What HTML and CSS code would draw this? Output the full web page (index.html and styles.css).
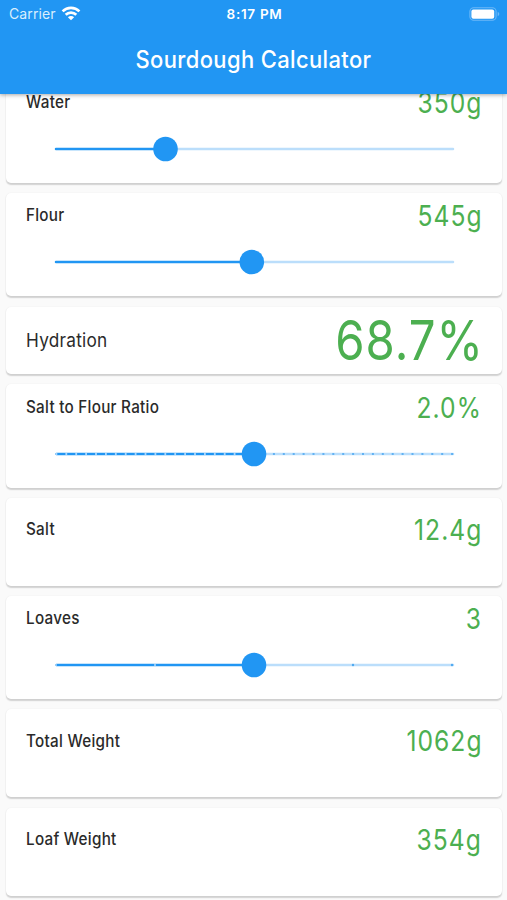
FILE: index.html
```
<!DOCTYPE html>
<html lang="en">
<head>
<meta charset="utf-8">
<title>Sourdough Calculator</title>
<link rel="stylesheet" href="styles.css">
</head>
<body>
<header class="appbar">
  <div class="status">
    <div class="carrier"><span>Carrier</span>
      <svg class="wifi" width="20" height="15" viewBox="0 0 20 15" fill="none" stroke="#fff" stroke-width="2.7">
        <path d="M1.6 5.4A12 12 0 0 1 18.4 5.4"/>
        <path d="M4.7 8.8A7.6 7.6 0 0 1 15.3 8.8"/>
        <path d="M10 14.2L6.9 11.2A4.4 4.4 0 0 1 13.1 11.2Z" fill="#fff" stroke="none"/>
      </svg>
    </div>
    <div class="clock">8:17 PM</div>
    <svg class="battery" width="31" height="14" viewBox="0 0 31 14">
      <rect x=".9" y=".7" width="26.2" height="12.6" rx="3.8" fill="none" stroke="#6cb8f8" stroke-width="1.1"/>
      <rect x="2.4" y="2.4" width="22.8" height="9.4" rx="2" fill="#fff"/>
      <path d="M28.7 4.8Q30.3 5.6 30.3 7T28.7 9.2Z" fill="#6cb8f8"/>
    </svg>
  </div>
  <h1 class="title">Sourdough Calculator</h1>
</header>
<main class="list">
  <section class="card slider-card">
    <div class="row"><span class="label">Water</span><span class="value">350g</span></div>
    <svg class="slider" width="402" height="26" viewBox="0 0 402 26">
      <path class="rest" d="M111 13H399"/><path class="done" d="M2 13H111"/><circle cx="111.5" cy="13" r="12.3"/>
    </svg>
  </section>
  <section class="card slider-card">
    <div class="row"><span class="label">Flour</span><span class="value">545g</span></div>
    <svg class="slider" width="402" height="26" viewBox="0 0 402 26">
      <path class="rest" d="M197 13H399"/><path class="done" d="M2 13H197"/><circle cx="197.8" cy="13" r="12.3"/>
    </svg>
  </section>
  <section class="card hydration">
    <div class="row"><span class="label">Hydration</span><span class="value">68.7%</span></div>
  </section>
  <section class="card slider-card ratio">
    <div class="row"><span class="label">Salt to Flour Ratio</span><span class="value">2.0%</span></div>
    <svg class="slider" width="402" height="26" viewBox="0 0 402 26">
      <path class="rest" d="M200 13H399"/><path class="done" d="M2.5 13H200"/>
      <path class="ticks-done" d="M1.5 13H200"/><path class="ticks-rest" d="M209 13H400"/><circle cx="200" cy="13" r="12.3"/>
    </svg>
  </section>
  <section class="card plain">
    <div class="row"><span class="label">Salt</span><span class="value">12.4g</span></div>
  </section>
  <section class="card slider-card">
    <div class="row"><span class="label">Loaves</span><span class="value">3</span></div>
    <svg class="slider" width="402" height="26" viewBox="0 0 402 26">
      <path class="rest" d="M200 13H399"/><path class="done" d="M2.5 13H200"/>
      <circle class="dot-done" cx="2" cy="13" r="1"/><circle class="dot-done" cx="101" cy="13" r="1.1"/>
      <circle class="dot" cx="299" cy="13" r="1.2"/><circle class="dot" cx="398" cy="13" r="1.2"/><circle cx="200" cy="13" r="12.3"/>
    </svg>
  </section>
  <section class="card plain">
    <div class="row"><span class="label">Total Weight</span><span class="value">1062g</span></div>
  </section>
  <section class="card plain">
    <div class="row"><span class="label">Loaf Weight</span><span class="value">354g</span></div>
  </section>
</main>
</body>
</html>
```
FILE: styles.css
```
* { box-sizing: border-box; }
body {
  margin: 0;
  height: 900px;
  overflow: hidden;
  background: #fafafa;
  color: #2a2a2a;
  font-family: Inter, "Liberation Sans", sans-serif;
}
.appbar {
  position: relative;
  z-index: 1;
  height: 93.5px;
  background: #2196f3;
  color: #fff;
  box-shadow: 0 1px 4px rgba(0, 0, 0, .35);
}
.status {
  display: grid;
  grid-template-columns: 1fr auto 1fr;
  align-items: center;
  height: 27px;
  padding: 0 7px 0 9px;
  font-size: 14px;
  line-height: 28px;
}
.carrier { display: flex; align-items: center; gap: 5px; color: #d9eefd; letter-spacing: .1px; }
.wifi { margin-top: -2px; }
.clock { font-weight: 600; font-size: 13.5px; letter-spacing: .7px; }
.battery { justify-self: end; margin-top: -1px; }
.title {
  margin: 0;
  height: 66px;
  line-height: 66px;
  text-align: center;
  font-size: 23.7px;
  font-weight: 550;
  letter-spacing: .4px;
  transform: scaleX(.927);
}
.list {
  display: flex;
  flex-direction: column;
  gap: 10.2px;
  margin-top: -13.8px;
  padding: 0 5px 0 6px;
}
.card {
  flex: none;
  padding: 0 21px 0 19.5px;
  border-radius: 5px;
  background: #fff;
  box-shadow: 0 1.3px 1.3px rgba(0, 0, 0, .16), 0 0 2px rgba(0, 0, 0, .06);
}
.row { display: flex; justify-content: space-between; align-items: center; height: 46px; }
.label {
  padding-bottom: 2px;
  font-size: 16.8px;
  font-weight: 550;
  line-height: 20px;
  letter-spacing: .3px;
  white-space: nowrap;
  transform: scaleX(.908);
  transform-origin: left;
}
.value {
  margin-right: -1.3px;
  color: #4caf50;
  font-size: 29px;
  line-height: 34px;
  letter-spacing: 1.2px;
  white-space: nowrap;
  transform: scaleX(.85);
  transform-origin: right;
}
.slider-card { height: 103.2px; }
.slider { display: block; margin: 10px 0 0 28.5px; overflow: visible; fill: #2196f3; }
.slider path { fill: none; stroke-width: 2.5; stroke-linecap: round; }
.slider .rest { stroke: #bbdefb; }
.slider .done { stroke: #2196f3; }
.slider .ticks-done { stroke: #a9d5fa; stroke-width: 1.8; stroke-linecap: butt; stroke-dasharray: 1.8 8.1; }
.slider .ticks-rest { stroke: #62b2f3; stroke-width: 2; stroke-linecap: butt; stroke-dasharray: 2 7.9; }
.slider .dot { fill: #4fa9f0; }
.slider .dot-done { fill: #a9d5fa; }
.hydration { height: 67px; margin-top: .8px; }
.hydration .row { height: 67px; }
.hydration .label { padding: 0; margin-top: 1px; font-size: 18.9px; font-weight: 400; transform: scaleX(.91); }
.hydration .value { margin: -1px -3.5px 0 0; font-size: 55px; line-height: 64px; transform: scaleX(.86); }
.ratio .row { height: 46.6px; }
.plain { height: 88px; }
.plain .row { height: 64.2px; }
.plain .label { padding-bottom: 1px; }
```
